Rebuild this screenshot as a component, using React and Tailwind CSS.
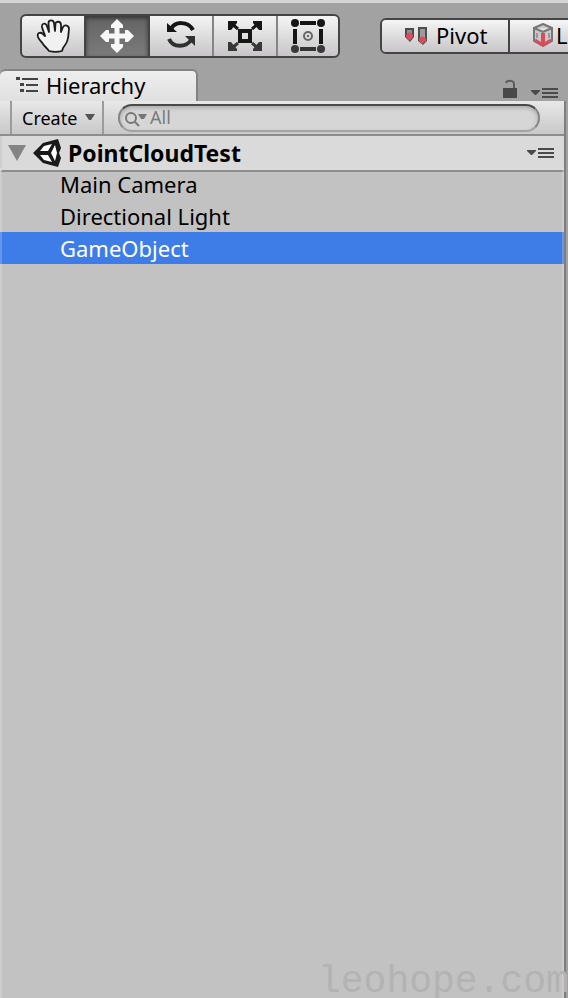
import React from "react";

function HandIcon() {
  return (
    <svg width="34" height="34" viewBox="0 0 34 34" fill="#f1f1f1" stroke="#1c1c1c" strokeWidth="1.8" strokeLinejoin="round" strokeLinecap="round" aria-hidden="true">
      <path d="M13 32 C11 29 9 28 7 25 C5 22 3 21 2 18 C0.800 14 4 12.500 7 15 L9 17 C8.500 14 6.500 11 6 8 C5.500 4.500 9 3.500 10.500 6 L13 13 L12.500 4 C12.500 0.500 17.500 0.500 18 4 L19 12 L19.500 4.500 C20 2 24.500 2 25 5.500 L25 13 L27 8 C29 5 33 6.500 33 10 C32.500 14 32.500 16 32 19 C31.500 24 29 26 27 29 L26 32 C22 33 17 33 13 32 Z" />
    </svg>
  );
}

function MoveIcon() {
  return (
    <svg width="36" height="36" viewBox="0 0 36 36" fill="#f7f7f7" aria-hidden="true">
      <path d="M18 1 L24 7 V10 H20.500 V15.500 H26 V12 H29 L35 18 L29 24 H26 V20.500 H20.500 V26 H24 V29 L18 35 L12 29 V26 H15.500 V20.500 H10 V24 H7 L1 18 L7 12 H10 V15.500 H15.500 V10 H12 V7 Z" />
    </svg>
  );
}

function RotateIcon() {
  return (
    <svg width="34" height="34" viewBox="0 0 34 34" fill="none" stroke="#151515" strokeWidth="4" aria-hidden="true">
      <path d="M7 10 C11 2 24 2 29 11" />
      <path d="M5 20 C9 29 22 29 28 20" stroke="#303030" />
      <path d="M3 4 V13 H13 Z" fill="#151515" stroke="none" />
      <path d="M31 17 V27 L21 17 Z" fill="#303030" stroke="none" />
    </svg>
  );
}

function ScaleIcon() {
  return (
    <svg width="36" height="34" viewBox="0 0 36 34" fill="none" stroke="#151515" strokeWidth="4" aria-hidden="true">
      <rect x="13" y="12" width="10" height="10" />
      <path d="M11 10 L4 4 M25 10 L32 4" strokeWidth="3" />
      <path d="M11 24 L4 30 M25 24 L32 30" stroke="#383838" strokeWidth="3" />
      <path d="M1 2 H10 V4 L4 11 H1 Z M35 2 H26 V4 L32 11 H35 Z" fill="#151515" stroke="none" />
      <path d="M1 32 H10 V30 L4 23 H1 Z M35 32 H26 V30 L32 23 H35 Z" fill="#383838" stroke="none" />
    </svg>
  );
}

function RectIcon() {
  return (
    <svg width="36" height="36" viewBox="0 0 36 36" fill="none" stroke="#151515" strokeWidth="4" aria-hidden="true">
      <path d="M10 5 H26 M5 11 V26 M31 11 V26" />
      <path d="M10 31 H26" stroke="#353535" />
      <circle cx="18" cy="18" r="4" stroke="#666" strokeWidth="2" />
      <path d="M17 17 h2 v2 h-2 z" fill="#666" stroke="none" />
      <g fill="#151515" stroke="none">
        <circle cx="5" cy="5" r="4" />
        <circle cx="31" cy="5" r="4" />
      </g>
      <g fill="#3a3a3a" stroke="none">
        <circle cx="5" cy="31" r="4" />
        <circle cx="31" cy="31" r="4" />
      </g>
    </svg>
  );
}

function PivotIcon() {
  return (
    <svg width="24" height="20" viewBox="0 0 24 20" aria-hidden="true">
      <path d="M1 3 H10 V12 L6 17 L1 12 Z" fill="#4a4a4a" />
      <path d="M3 5 H8 V9 H3 Z" fill="#909090" />
      <path d="M5.500 7 L9 10 V12 L5.500 16 L2 12 V10 Z" fill="#e0485c" />
      <path d="M14 2 H23 V16 L19 20 L14 16 Z" fill="#4f4f4f" />
      <path d="M16 4 H21 V13 H16 Z" fill="#9b9b9b" />
      <path d="M18.500 11 L22 14 V16 L18.500 19 L15 16 V14 Z" fill="#e0485c" />
    </svg>
  );
}

function CubeIcon() {
  return (
    <svg width="22" height="24" viewBox="0 0 22 24" fill="#c9c9c9" stroke="#777" strokeWidth="2" aria-hidden="true">
      <path d="M11 1 L20 5 V18 L11 23 L2 18 V5 Z" />
      <path d="M2 5 L11 9 L20 5" fill="#dedede" />
      <path d="M5 10 V15 M17 10 V15" stroke="#999" />
      <path d="M3 17 L11 22 L19 17" fill="none" stroke="#dc4b5c" strokeWidth="3" />
      <path d="M11 10 V22" stroke="#dc4b5c" strokeWidth="4" />
    </svg>
  );
}

function TreeIcon() {
  return (
    <svg width="24" height="18" viewBox="0 0 24 18" fill="#444" aria-hidden="true">
      <path d="M0 1h4v3h-4z M6 2h16v2h-16z M4 7h4v3h-4z M10 8h12v2h-12z M4 13h4v3h-4z M10 14h12v2h-12z" />
    </svg>
  );
}

function LockIcon() {
  return (
    <svg width="16" height="20" viewBox="0 0 16 20" aria-hidden="true">
      <rect x="1" y="9" width="14" height="10" fill="#484848" />
      <path d="M12 9 V5 C12 1 5 1 4 4" fill="none" stroke="#5c5c5c" strokeWidth="2" />
    </svg>
  );
}

function MenuIcon() {
  return (
    <svg width="28" height="12" viewBox="0 0 28 12" fill="#4a4a4a" aria-hidden="true">
      <path d="M1 3h9v1l-4 4h-1l-4-4z M12 1h16v2h-16z M12 5h16v2h-16z M12 9h16v2h-16z" />
    </svg>
  );
}

function SearchIcon() {
  return (
    <svg width="24" height="18" viewBox="0 0 24 18" fill="none" stroke="#777" strokeWidth="2" aria-hidden="true">
      <circle cx="7" cy="9" r="5" />
      <path d="M11 13 L15 17" />
      <path d="M14 5 h9 l-3 5 h-3 z" fill="#777" stroke="none" />
    </svg>
  );
}

function UnityIcon() {
  return (
    <svg width="30" height="30" viewBox="0 0 28 30" fill="#fff" aria-hidden="true">
      <path d="M0 15 L10 5 L25 1 L28 10 L26 15 L28 20 L25 29 L10 25 Z" fill="#1a1a1a" />
      <path d="M11 8 L19 6 L15 13 H7 Z" />
      <path d="M7 17 H15 L19 24 L11 22 Z" />
      <path d="M22 7 L24 15 L22 23 L18 15 Z" />
    </svg>
  );
}

const tools = [
  { label: "Hand", Icon: HandIcon },
  { label: "Move", Icon: MoveIcon, active: true },
  { label: "Rotate", Icon: RotateIcon },
  { label: "Scale", Icon: ScaleIcon },
  { label: "Rect", Icon: RectIcon },
];

const objects = ["Main Camera", "Directional Light", "GameObject"];

export default function App() {
  return (
    <div className="relative flex h-screen flex-col overflow-hidden bg-[#a2a2a2] font-['Noto_Sans','Open_Sans',sans-serif] text-[22px] leading-8 text-black">
      <header className="flex h-[69px] shrink-0 items-start border-t-3 border-[#d4d4d4] pt-[11px] pl-5">
        <div className="flex h-11 w-80 shrink-0 overflow-hidden rounded-md border-2 border-[#444] bg-[#444]">
          {tools.map(({ label, Icon, active }) => (
            <button
              key={label}
              aria-label={label}
              aria-pressed={!!active}
              className={
                "flex w-16 shrink-0 items-center justify-center border-r-2 last:w-15 last:border-r-0 " +
                (active
                  ? "border-[#444] bg-linear-to-b from-[#636363] to-[#7b7b7b] inset-shadow-sm inset-shadow-black/50"
                  : "border-[#858585] bg-linear-to-b from-[#f5f5f5] to-[#c8c6c8] first:border-[#444]")
              }
            >
              <Icon />
            </button>
          ))}
        </div>
        <div className="mt-1 ml-10 flex h-9 w-64 shrink-0 overflow-hidden rounded-md border-2 border-[#444]">
          <button className="flex w-32 items-center gap-2 border-r-2 border-[#444] bg-linear-to-b from-[#f5f5f5] to-[#c8c6c8] pb-[2px] pl-[22px]">
            <PivotIcon />
            Pivot
          </button>
          <button className="flex flex-1 items-center gap-[2px] bg-linear-to-b from-[#f5f5f5] to-[#c8c6c8] pb-[2px] pl-[22px]">
            <CubeIcon />
            Local
          </button>
        </div>
      </header>

      <div className="flex h-8 shrink-0 items-end justify-between pr-[10px]">
        <div role="tab" className="flex h-8 w-[198px] items-center gap-1 rounded-t-md border-t-2 border-r-2 border-[#828282] bg-linear-to-b from-[#eeeeee] to-[#e0e0e0] pb-[2px] pl-4">
          <TreeIcon />
          <span className="pl-[2px]">Hierarchy</span>
        </div>
        <div className="flex items-end gap-3 pb-[2px]">
          <button aria-label="Lock"><LockIcon /></button>
          <button aria-label="Panel menu"><MenuIcon /></button>
        </div>
      </div>

      <main className="mr-[2px] flex min-h-0 flex-1 flex-col border-r-2 border-[#7f7f7f] bg-[#c2c2c2]">
        <div className="flex h-[35px] shrink-0 items-center border-b-2 border-[#8d8d8d] bg-linear-to-b from-[#e8e8e8] to-[#c8c8c8] pr-6 pl-[10px]">
          <button className="flex h-full w-[94px] shrink-0 items-center gap-2 border-x-2 border-[#9b9b9b] pl-[10px] text-[18px]">
            Create
            <svg width="10" height="8" viewBox="0 0 10 8" fill="#555" aria-hidden="true"><path d="M0 0h10l-4 6h-2z" /></svg>
          </button>
          <label className="ml-[14px] flex h-7 min-w-0 flex-1 items-center rounded-full border-2 border-t-[#4a4a4a] border-r-[#858585] border-b-[#a2a2a2] border-l-[#858585] bg-[#d6d6d6] pl-1 inset-shadow-sm inset-shadow-black/20">
            <SearchIcon />
            <input aria-label="Search hierarchy" placeholder="All" className="min-w-0 flex-1 bg-transparent pb-[2px] pl-[2px] text-[18px] leading-6 outline-none placeholder:text-[#7b7b7b]" />
          </label>
        </div>

        <div className="flex h-9 shrink-0 items-center border-b-2 border-l-2 border-b-[#8d8d8d] border-l-[#cfcfcf] bg-[#dadada] pr-[10px] pl-1.5">
          <svg width="18" height="16" viewBox="0 0 18 16" fill="#848484" aria-hidden="true"><path d="M0 0h18l-9 16z" /></svg>
          <span className="pr-1.5 pl-[6px]"><UnityIcon /></span>
          <h1 className="flex-1 text-[23px] font-bold">PointCloudTest</h1>
          <button aria-label="Scene menu"><MenuIcon /></button>
        </div>

        <ul className="-mt-1 flex-1 border-x-2 border-white/20">
          {objects.map((name) => (
            <li key={name} className={name === "GameObject" ? "-mx-[2px] h-8 border-x-2 border-white/20 bg-[#3e7de7] pl-[58px] text-white" : "h-8 pl-[58px]"}>
              {name}
            </li>
          ))}
        </ul>
      </main>
      <p className="absolute bottom-0 left-[318px] font-['Liberation_Mono',monospace] text-[38px] leading-8 text-[#b3b3b3]">leohope.com</p>
    </div>
  );
}
